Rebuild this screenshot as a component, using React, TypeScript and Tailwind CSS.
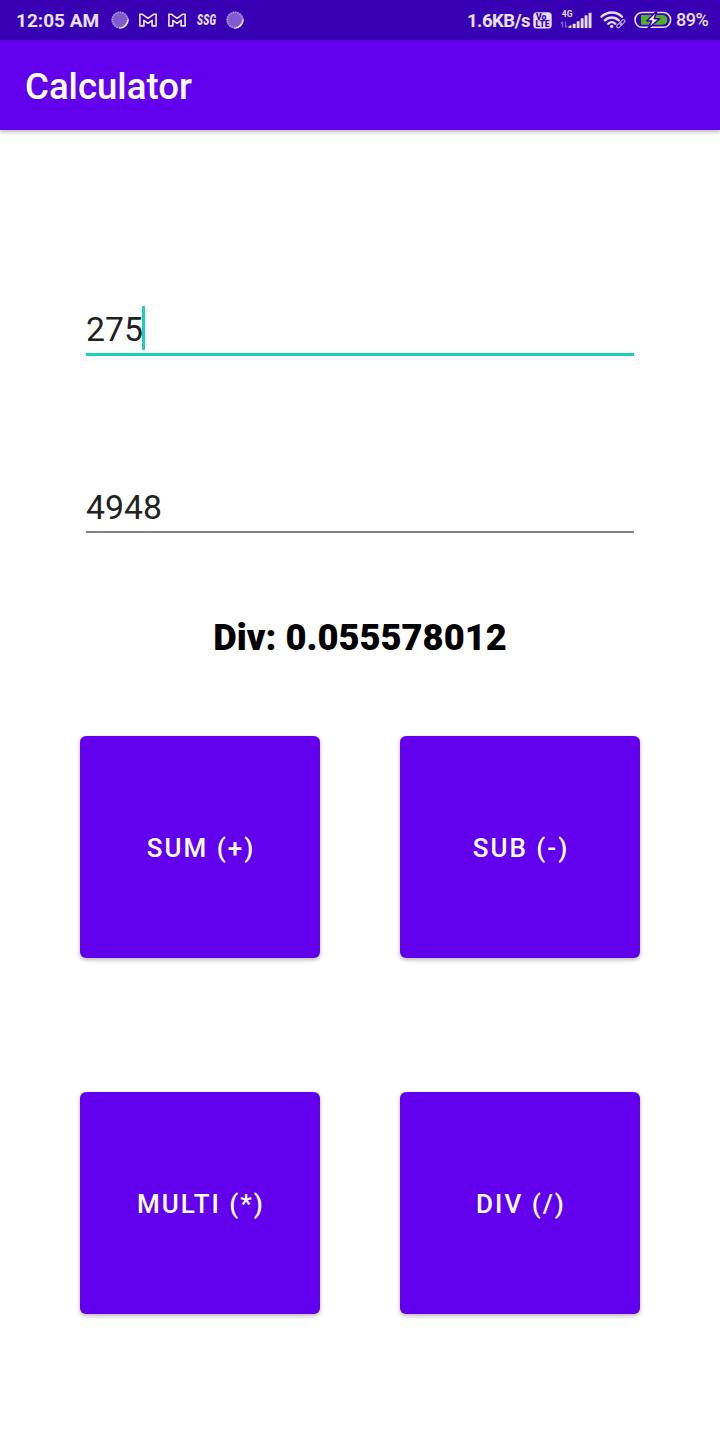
import React from "react";

function Disc() {
  return (
    <svg width="18" height="18" viewBox="0 0 18 18" className="block">
      <circle cx="9" cy="9" r="8.6" fill="#7f5bcd" />
      <circle cx="9" cy="9" r="7.6" fill="none" stroke="#b9a2e6" strokeWidth="1.8" strokeDasharray="1.1 1.28" />
      <path d="M17.300 8A8.400 8.400 0 0 1 8.500 17.300C13 16.200 16 13 17.300 8z" fill="#efe7fb" stroke="#efe7fb" strokeWidth=".6" />
    </svg>
  );
}

function Mail() {
  return (
    <svg width="18" height="14" viewBox="0 0 18 14" className="block">
      <path
        d="M.9 1.300v11.600h4V7.300L9 10.300l4.100-3v5.600h4V1.300h-2.600L9 5.300 3.500 1.300z"
        fill="none"
        stroke="#f1eafc"
        strokeWidth="1.600"
        strokeLinejoin="round"
      />
    </svg>
  );
}

function Volte() {
  return (
    <svg width="19" height="17" viewBox="0 0 19 17" className="block">
      <rect x=".3" y=".3" width="18.400" height="16.200" rx="3.500" fill="#e6dcf7" />
      <g fill="#3700b3" fontSize="8.500" fontWeight="900">
        <text x="3" y="7.800" textLength="10.500" lengthAdjust="spacingAndGlyphs">Vo</text>
        <text x="2.600" y="15.100" textLength="14" lengthAdjust="spacingAndGlyphs">LTE</text>
      </g>
    </svg>
  );
}

function Signal() {
  return (
    <svg width="32" height="20" viewBox="0 0 32 20" className="block">
      <text x="1.800" y="7.400" fontSize="8.500" fontWeight="700" fill="#e6dcf7">4G</text>
      <path d="M2.500 17.500v-6M1 13.500l1.500-1.700M5.500 11.500v6M7 15.800L5.500 17.500" fill="none" stroke="#8460d0" strokeWidth="1.300" />
      <g fill="#e6dcf7">
        <path d="M8.600 18v-1.700l2.800-1.300v3z" />
        <rect x="12.700" y="13.700" width="2.900" height="4.300" rx=".5" />
        <rect x="16.700" y="11.300" width="2.900" height="6.700" rx=".5" />
        <rect x="20.700" y="8.300" width="2.900" height="9.700" rx=".5" />
        <rect x="24.600" y="5.300" width="2.900" height="12.700" rx=".5" />
        <rect x="28.600" y="2.800" width="2.900" height="15.200" rx=".5" />
      </g>
    </svg>
  );
}

function Wifi() {
  return (
    <svg width="26" height="18" viewBox="0 0 26 18" className="block">
      <g fill="none" stroke="#e6dcf7" strokeWidth="2.300" strokeLinecap="round">
        <path d="M1.500 5.700C7.500.1 16.500.1 22 5.700" />
        <path d="M4.800 9.400c4-3.900 10-3.900 14 0" />
        <path d="M8.200 12.800c2.200-2 5-2 7.200 0" />
      </g>
      <circle cx="11.700" cy="15.400" r="1.700" fill="#e6dcf7" />
      <g fill="none" stroke="#c3aeea" strokeWidth="1.100">
        <rect x="-3" y="-1.500" width="6" height="3" rx="1.500" transform="translate(19.300 14.200) rotate(-45)" />
        <rect x="-3" y="-1.500" width="6" height="3" rx="1.500" transform="translate(22.400 11.200) rotate(-45)" />
      </g>
    </svg>
  );
}

function Battery() {
  return (
    <svg width="38" height="18" viewBox="0 0 38 18" className="block">
      <rect x="1" y="1.500" width="35.600" height="14.800" rx="7.200" fill="none" stroke="#e6dcf7" strokeWidth="1.600" />
      <path d="M7 4H28.500a4.900 4.900 0 0 1 0 9.800H7z" fill="#4fb02a" />
      <path d="M22.800.2L12.600 10h5.200l-4 7.800L25.600 7.800h-5.400z" fill="#f7f2fe" stroke="#3700b3" strokeWidth="1.500" strokeLinejoin="round" />
    </svg>
  );
}

function StatusBar() {
  return (
    <div className="flex h-10 items-center justify-between bg-[#3700b3] pr-3 pl-4 text-[#e9e0f9]">
      <div className="flex items-center">
        <span className="w-[94.500px] pt-px text-[19px] leading-5 font-bold whitespace-nowrap">12:05 AM</span>
        <Disc />
        <span className="ml-[10.500px]"><Mail /></span>
        <span className="ml-[11px]"><Mail /></span>
        <span className="ml-[10.500px] w-[20px] origin-left scale-x-[.66] text-[15px] leading-5 font-black tracking-[.4px] italic">SSG</span>
        <span className="ml-[9.500px]"><Disc /></span>
      </div>
      <div className="flex items-center">
        <span className="w-[66px] pt-px text-[18.500px] leading-5 font-bold tracking-[-.5px] whitespace-nowrap">1.6KB/s</span>
        <Volte />
        <span className="ml-[8px]"><Signal /></span>
        <span className="ml-[8px]"><Wifi /></span>
        <span className="ml-[8px]"><Battery /></span>
        <span className="ml-[4px] w-[32px] text-[18px] leading-5 font-medium tracking-[-.5px] whitespace-nowrap">89%</span>
      </div>
    </div>
  );
}

function OpButton({ label }: { label: string }) {
  return (
    <button className="flex h-[222px] w-[240px] items-center justify-center rounded-[6px] bg-[#6200ee] pt-[2px] pl-[2px] text-[26px] leading-8 font-medium tracking-[2px] text-white shadow-[0_2px_4px_rgba(0,0,0,0.28)]">
      {label}
    </button>
  );
}

export default function App() {
  return (
    <div className="flex h-[1440px] w-[720px] flex-col overflow-hidden bg-white font-['Roboto',sans-serif]">
      <StatusBar />
      <header className="flex h-[90px] shrink-0 items-center bg-[#6200ee] pt-[5px] pl-[25px] text-[36.600px] font-medium text-white shadow-[0_2px_4px_rgba(0,0,0,0.28)]">
        Calculator
      </header>
      <main className="flex flex-col px-20">
        <div className="mx-[6px] mt-[176px] flex h-[50px] items-start border-b-[3px] border-[#1acfbc] text-[33.750px] leading-[48px] text-[#212121]">
          <span>275</span>
          <span className="-ml-px h-[44px] w-[3px] bg-[#1acfbc]" />
        </div>
        <div className="mx-[6px] mt-[128px] h-[49px] border-b-2 border-[#828282] text-[33.750px] leading-[48px] text-[#212121]">
          4948
        </div>
        <p className="mt-[81px] text-center text-[36.300px] leading-[48px] font-black whitespace-nowrap text-black">Div: 0.055578012</p>
        <div className="mt-[74px] grid grid-cols-2 gap-x-20 gap-y-[134px]">
          <OpButton label="SUM (+)" />
          <OpButton label="SUB (-)" />
          <OpButton label="MULTI (*)" />
          <OpButton label="DIV (/)" />
        </div>
      </main>
    </div>
  );
}
